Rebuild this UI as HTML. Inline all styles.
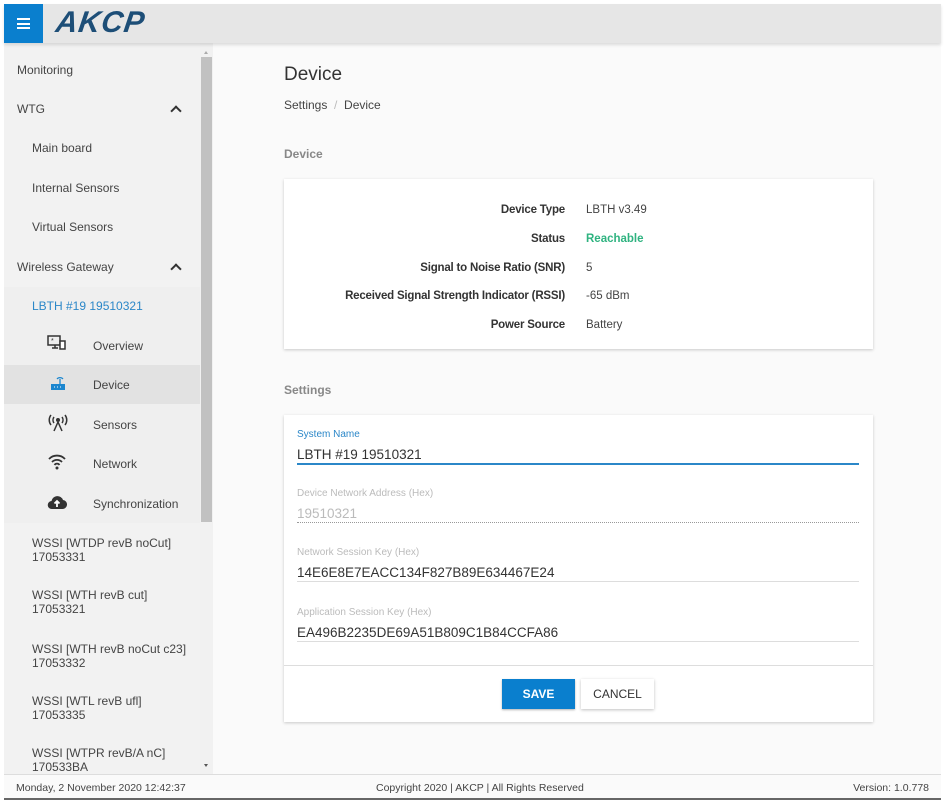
<!DOCTYPE html>
<html><head><style>
*{box-sizing:border-box;margin:0;padding:0}
body{width:944px;height:809px;background:#fff;font-family:"Liberation Sans",sans-serif;position:relative;overflow:hidden;color:#333}
.frame{position:absolute;left:4px;top:4px;width:937px;height:796px;background:#fafafa;border-bottom:2px solid #666}
.hdr{position:absolute;left:0;top:0;width:937px;height:39px;background:#e6e6e6;box-shadow:0 2px 3px rgba(0,0,0,.12);z-index:2}
.menu{position:absolute;left:0;top:0;width:39px;height:39px;background:#0a7fce}
.menu i{position:absolute;left:13px;width:13px;height:2px;background:#fff}
.logo{position:absolute;left:52px;top:2px;font:italic 900 30px "Liberation Sans",sans-serif;color:#1d4e77;letter-spacing:1px;transform:skewX(-8deg)}
.side{position:absolute;left:0;top:39px;width:209px;height:731px;background:#f2f2f2;overflow:hidden}
.it{position:absolute;left:0;width:196px;font-size:12px;color:#444;line-height:14px}
.sb{position:absolute;left:196px;top:0;width:13px;height:731px;background:#f1f1f1}
.thumb{position:absolute;left:1px;top:14px;width:11px;height:465px;background:#c1c1c1}
.chev{position:absolute;left:168px;width:8px;height:8px;border-left:2px solid #333;border-top:2px solid #333;transform:rotate(45deg)}
.main{position:absolute;left:205px;top:39px}
.card{position:absolute;left:75px;width:589px;background:#fff;box-shadow:0 1px 3px rgba(0,0,0,.2)}
.lbl{position:absolute;right:308px;font-size:11.5px;font-weight:bold;color:#333;text-align:right;white-space:nowrap;letter-spacing:-.2px}
.val{position:absolute;left:302px;font-size:11.5px;color:#444}
.f{position:absolute;left:13px;width:562px}
.fl{font-size:10px;color:#bbb;height:14px}
.fv{font-size:13.5px;color:#333;height:20px;padding-top:4px}
.ul{height:1px;background:#ddd;margin-top:0}
.foot{position:absolute;left:0;top:770px;width:937px;height:24px;font-size:10.5px;color:#444;line-height:26px;border-top:1px solid #ddd}
</style></head><body>
<div class="frame">
<div class="hdr"><div class="menu"><i style="top:14px"></i><i style="top:18.5px"></i><i style="top:23px"></i></div>
<div class="logo">AKCP</div></div>
<div class="side">
<div class="it" style="top:20px;left:13px">Monitoring</div>
<div class="it" style="top:59px;left:13px">WTG</div><div class="chev" style="top:64px"></div>
<div class="it" style="top:98px;left:28px">Main board</div>
<div class="it" style="top:138px;left:28px">Internal Sensors</div>
<div class="it" style="top:177px;left:28px">Virtual Sensors</div>
<div class="it" style="top:217px;left:13px">Wireless Gateway</div><div class="chev" style="top:222px"></div>
<div style="position:absolute;left:0;top:244px;width:196px;height:236px;background:#efefef"></div>
<div class="it" style="top:256px;left:28px;color:#2b87c8">LBTH #19 19510321</div>
<div style="position:absolute;left:0;top:322px;width:196px;height:39px;background:#e2e2e2"></div>
<svg style="position:absolute;left:43px;top:292px" width="20" height="18" viewBox="0 0 20 18"><rect x="1" y="1" width="12" height="9" fill="none" stroke="#333" stroke-width="1.5"/><path d="M5 13h6M8 10v3" stroke="#333" stroke-width="1.5"/><rect x="13" y="6" width="5" height="8" fill="#fff" stroke="#333" stroke-width="1.5"/><text x="4" y="8" font-size="7" fill="#333">*</text></svg>
<div class="it" style="top:296px;left:89px">Overview</div>
<svg style="position:absolute;left:45px;top:332px" width="18" height="18" viewBox="0 0 18 18"><rect x="2" y="9" width="14" height="6" fill="#1b86cf"/><path d="M11 9V4M8 4a4 4 0 0 1 6 0" stroke="#1b86cf" stroke-width="1.3" fill="none"/><path d="M5 12h1M8 12h1M11 12h1" stroke="#fff"/></svg>
<div class="it" style="top:335px;left:89px">Device</div>
<svg style="position:absolute;left:44px;top:370px" width="20" height="20" viewBox="0 0 20 20"><circle cx="10" cy="7" r="2" fill="#333"/><path d="M6 10a5 5 0 0 1 0-6M14 10a5 5 0 0 0 0-6M3 12a8 8 0 0 1 0-10M17 12a8 8 0 0 0 0-10M10 9l-4 9M10 9l4 9" stroke="#333" stroke-width="1.5" fill="none"/></svg>
<div class="it" style="top:375px;left:89px">Sensors</div>
<svg style="position:absolute;left:44px;top:411px" width="18" height="16" viewBox="0 0 18 16"><path d="M1 5a11 11 0 0 1 16 0M4 8a7 7 0 0 1 10 0M6.5 11a3 3 0 0 1 5 0" stroke="#333" stroke-width="1.8" fill="none"/><circle cx="9" cy="14" r="1.5" fill="#333"/></svg>
<div class="it" style="top:414px;left:89px">Network</div>
<svg style="position:absolute;left:43px;top:451px" width="20" height="16" viewBox="0 0 20 16"><path d="M5 15a4 4 0 0 1-0.5-8A6 6 0 0 1 16 6a4.5 4.5 0 0 1-1 9z" fill="#333"/><path d="M10 13V7M7.5 9.5L10 7l2.5 2.5" stroke="#fff" stroke-width="1.8" fill="none"/></svg>
<div class="it" style="top:454px;left:89px">Synchronization</div>
<div class="it" style="top:493px;left:28px">WSSI [WTDP revB noCut]<br>17053331</div>
<div class="it" style="top:545px;left:28px">WSSI [WTH revB cut]<br>17053321</div>
<div class="it" style="top:599px;left:28px">WSSI [WTH revB noCut c23]<br>17053332</div>
<div class="it" style="top:651px;left:28px">WSSI [WTL revB ufl]<br>17053335</div>
<div class="it" style="top:703px;left:28px">WSSI [WTPR revB/A nC]<br>170533BA</div>
<div class="sb"><div class="thumb"></div><div style="position:absolute;left:4px;top:6px;border:2.5px solid transparent;border-bottom:3px solid #aaa"></div><div style="position:absolute;left:4px;top:721px;border:2.5px solid transparent;border-top:3px solid #555"></div></div>
</div>
<div class="main">
<div style="position:absolute;left:75px;top:21px;font-size:19px;color:#333;white-space:nowrap">Device</div>
<div style="position:absolute;left:75px;top:55px;font-size:12px;color:#444;white-space:nowrap">Settings <span style="color:#bbb">&nbsp;/&nbsp;</span> Device</div>
<div style="position:absolute;left:75px;top:104px;font-size:12px;color:#888;font-weight:bold">Device</div>
<div class="card" style="top:136px;height:170px">
<div class="lbl" style="top:25px">Device Type</div><div class="val" style="top:25px">LBTH v3.49</div>
<div class="lbl" style="top:54px">Status</div><div class="val" style="top:54px;color:#2fb380;font-weight:bold">Reachable</div>
<div class="lbl" style="top:83px">Signal to Noise Ratio (SNR)</div><div class="val" style="top:83px">5</div>
<div class="lbl" style="top:111px">Received Signal Strength Indicator (RSSI)</div><div class="val" style="top:111px">-65 dBm</div>
<div class="lbl" style="top:140px">Power Source</div><div class="val" style="top:140px">Battery</div>
</div>
<div style="position:absolute;left:75px;top:340px;font-size:12px;color:#888;font-weight:bold">Settings</div>
<div class="card" style="top:372px;height:307px">
<div class="f" style="top:14px"><div class="fl" style="color:#2b87c8">System Name</div><div class="fv">LBTH #19 19510321</div><div class="ul" style="height:2px;background:#2b87c8"></div></div>
<div class="f" style="top:73px"><div class="fl">Device Network Address (Hex)</div><div class="fv" style="color:#bbb">19510321</div><div class="ul" style="background:none;border-top:1px dotted #999"></div></div>
<div class="f" style="top:132px"><div class="fl">Network Session Key (Hex)</div><div class="fv">14E6E8E7EACC134F827B89E634467E24</div><div class="ul"></div></div>
<div class="f" style="top:192px"><div class="fl">Application Session Key (Hex)</div><div class="fv">EA496B2235DE69A51B809C1B84CCFA86</div><div class="ul"></div></div>
<div style="position:absolute;left:0;top:250px;width:589px;height:1px;background:#ddd"></div>
<div style="position:absolute;left:218px;top:264px;width:73px;height:30px;background:#0a7fce;color:#fff;font-size:12px;font-weight:bold;text-align:center;line-height:30px;box-shadow:0 1px 2px rgba(0,0,0,.3)">SAVE</div>
<div style="position:absolute;left:297px;top:264px;width:73px;height:30px;background:#fff;color:#333;font-size:12px;text-align:center;line-height:30px;box-shadow:0 1px 3px rgba(0,0,0,.25)">CANCEL</div>
</div>
</div>
<div class="foot"><span style="position:absolute;left:12px">Monday, 2 November 2020 12:42:37</span><span style="position:absolute;left:372px">Copyright 2020 | AKCP | All Rights Reserved</span><span style="position:absolute;right:12px">Version: 1.0.778</span></div>
</div>
</body></html>
